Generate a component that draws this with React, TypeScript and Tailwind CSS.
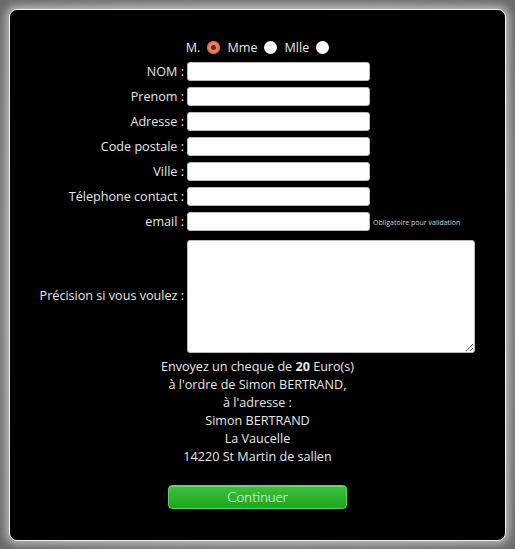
import React from 'react'

const fields = ['NOM :', 'Prenom :', 'Adresse :', 'Code postale :', 'Ville :', 'Télephone contact :', 'email :']

const Radio = ({ checked }: { checked?: boolean }) => (
  <span
    className={
      checked
        ? 'inline-flex h-[13px] w-[13px] items-center justify-center rounded-full bg-[#e8825c] shadow-[inset_0_0_0_1px_#c9603a]'
        : 'inline-block h-[13px] w-[13px] rounded-full bg-white'
    }
  >
    {checked && <span className="h-[5px] w-[5px] rounded-full bg-[#6b2a14]" />}
  </span>
)

const App = () => {
  return (
    <div className="h-[549px] w-[515px] bg-[radial-gradient(ellipse_at_center,#9a9a9a_0%,#6a6a6a_100%)] p-[9px] font-['Open_Sans',sans-serif] text-[12.6px] text-[#e8e8e8]">
      <div className="h-[532px] w-[497px] rounded-[8px] border border-[#f2f2f2] bg-black pt-[28px] shadow-[0_0_8px_3px_rgba(255,255,255,0.55)]">
        <div className="flex h-[19px] items-center justify-center gap-[7px] leading-[19px]">
          <span>M.</span>
          <Radio checked />
          <span>Mme</span>
          <Radio />
          <span>Mlle</span>
          <Radio />
        </div>
        <div className="mt-[5px] grid grid-cols-[175px_auto] gap-x-[2px] gap-y-[6px]">
          {fields.map((f, i) => (
            <React.Fragment key={f}>
              <label className="pr-[1px] text-right leading-[19px]">{f}</label>
              <div className="flex items-center">
                <input className="h-[19px] w-[183px] rounded-[3px] border border-[#bbb] bg-white" />
                {i === fields.length - 1 && (
                  <span className="ml-[3px] mt-[3px] text-[7px] text-[#d0d0d0]">Obligatoire pour validation</span>
                )}
              </div>
            </React.Fragment>
          ))}
          <label className="mt-[3px] flex items-center justify-end pr-[1px]">Précision si vous voulez :</label>
          <div className="mt-[3px]">
            <textarea className="block h-[113px] w-[288px] resize rounded-[3px] border border-[#bbb] bg-white" />
          </div>
        </div>
        <div className="mt-[5px] text-center leading-[18px]">
          <p>Envoyez un cheque de <b>20</b> Euro(s)</p>
          <p>à l'ordre de Simon BERTRAND,</p>
          <p>à l'adresse :</p>
          <p>Simon BERTRAND</p>
          <p>La Vaucelle</p>
          <p>14220 St Martin de sallen</p>
        </div>
        <div className="mt-[19px] flex justify-center">
          <button className="h-[24px] w-[179px] rounded-[4px] border border-[#5fd35f] bg-[linear-gradient(#3cc23c,#1fa51f)] font-['Lato',sans-serif] text-[14px] font-light leading-[22px] text-white shadow-[inset_0_1px_0_rgba(255,255,255,0.3)]">
            Continuer
          </button>
        </div>
      </div>
    </div>
  )
}

export default App
